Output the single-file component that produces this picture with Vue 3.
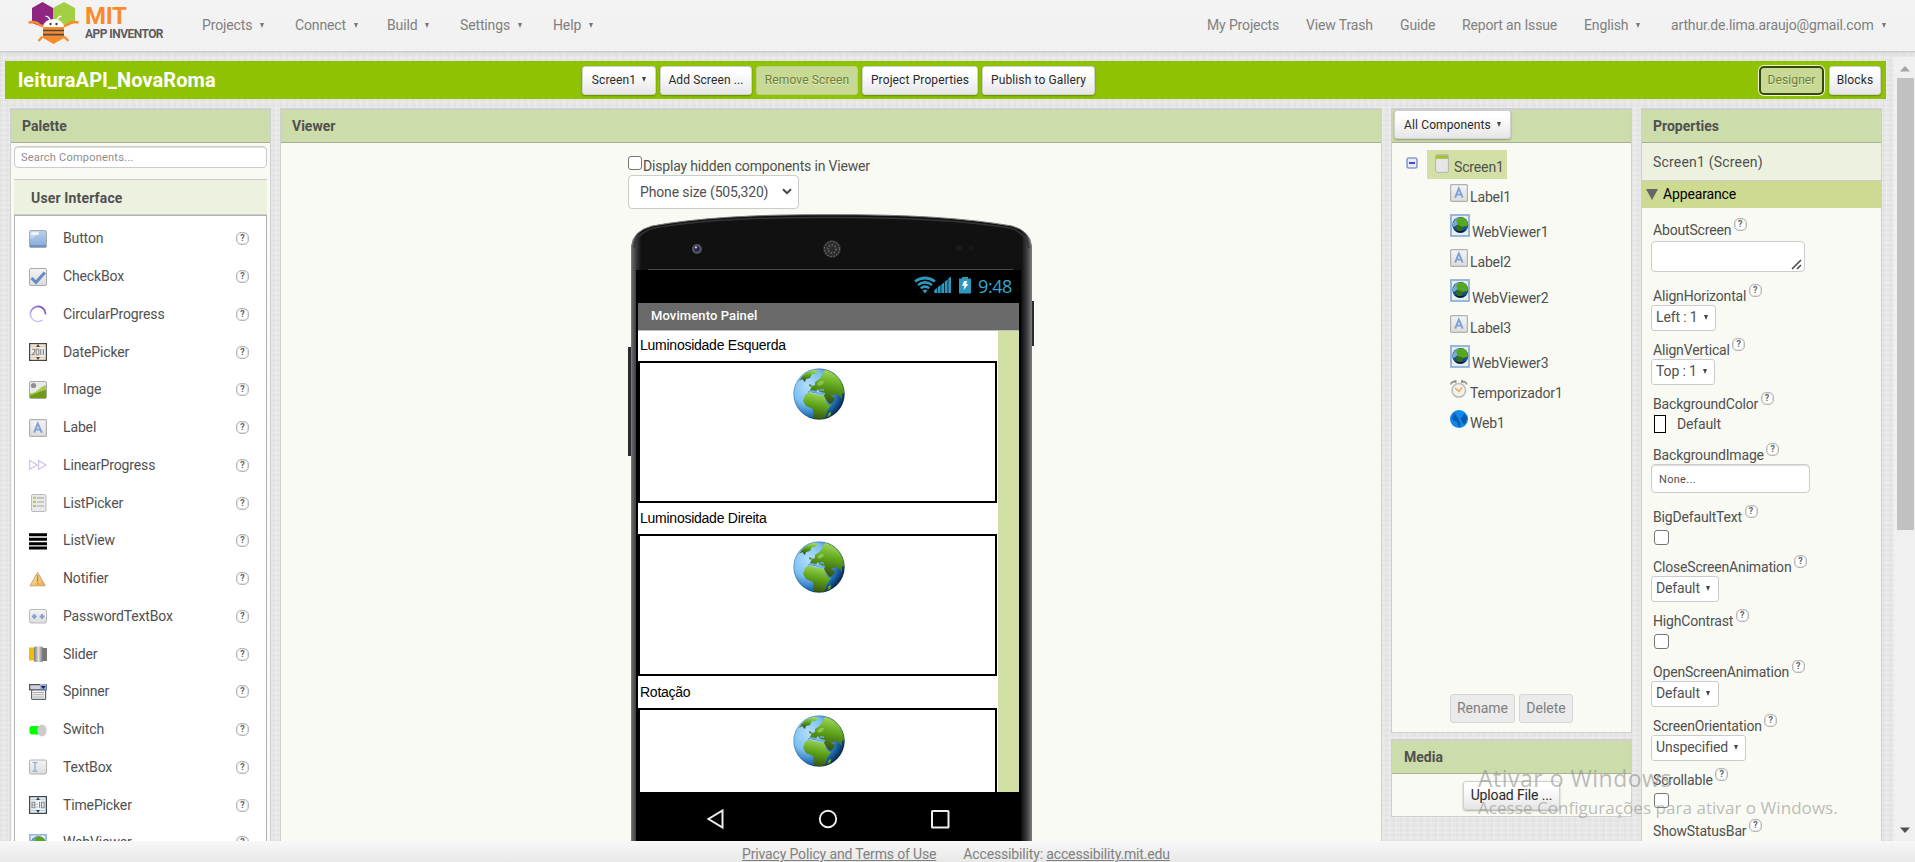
<script setup>
const menus = [
  { t: 'Projects', w: 93 },
  { t: 'Connect', w: 92 },
  { t: 'Build', w: 73 },
  { t: 'Settings', w: 93 },
  { t: 'Help', w: 60 },
]
const links = [
  { t: 'My Projects', w: 99 },
  { t: 'View Trash', w: 94 },
  { t: 'Guide', w: 62 },
  { t: 'Report an Issue', w: 122 },
  { t: 'English', w: 87, a: true },
  { t: 'arthur.de.lima.araujo@gmail.com', w: 244, a: true },
]
const palette = [
  ['Button', 'button'], ['CheckBox', 'check'], ['CircularProgress', 'circular'], ['DatePicker', 'date'],
  ['Image', 'image'], ['Label', 'label'], ['LinearProgress', 'linear'], ['ListPicker', 'listpicker'],
  ['ListView', 'listview'], ['Notifier', 'notifier'], ['PasswordTextBox', 'password'], ['Slider', 'slider'],
  ['Spinner', 'spinner'], ['Switch', 'switch'], ['TextBox', 'textbox'], ['TimePicker', 'time'], ['WebViewer', 'webviewer'],
]
const tree = [
  ['Label1', 'label'], ['WebViewer1', 'webviewer'], ['Label2', 'label'], ['WebViewer2', 'webviewer'],
  ['Label3', 'label'], ['WebViewer3', 'webviewer'], ['Temporizador1', 'clock'], ['Web1', 'web'],
]
const props = [
  { n: 'AboutScreen', k: 'area', h: 66 },
  { n: 'AlignHorizontal', k: 'sel', v: 'Left : 1', h: 54, w: 65 },
  { n: 'AlignVertical', k: 'sel', v: 'Top : 1', h: 54, w: 64 },
  { n: 'BackgroundColor', k: 'color', v: 'Default', h: 51 },
  { n: 'BackgroundImage', k: 'input', v: 'None...', h: 62 },
  { n: 'BigDefaultText', k: 'cb', h: 50 },
  { n: 'CloseScreenAnimation', k: 'sel', v: 'Default', h: 54, w: 68 },
  { n: 'HighContrast', k: 'cb', h: 51 },
  { n: 'OpenScreenAnimation', k: 'sel', v: 'Default', h: 54, w: 68 },
  { n: 'ScreenOrientation', k: 'sel', v: 'Unspecified', h: 54, w: 95 },
  { n: 'Scrollable', k: 'cb', h: 51 },
  { n: 'ShowStatusBar', k: '', h: 51 },
]
const screens = ['Luminosidade Esquerda', 'Luminosidade Direita', 'Rotação']
</script>

<template>
  <div class="app">
    <svg class="defs" width="0" height="0">
      <defs>
        <linearGradient id="gBlue" x1="0" y1="0" x2="0" y2="1"><stop offset="0" stop-color="#b9cfec" /><stop offset="1" stop-color="#86a9d6" /></linearGradient>
        <linearGradient id="gGrey" x1="0" y1="0" x2="0" y2="1"><stop offset="0" stop-color="#f4f4f4" /><stop offset="1" stop-color="#dcdcdc" /></linearGradient>
        <linearGradient id="gWarn" x1="0" y1="0" x2="1" y2="1"><stop offset="0" stop-color="#fff0c8" /><stop offset="1" stop-color="#e8a63c" /></linearGradient>
        <linearGradient id="gKnob" x1="0" x2="1"><stop offset="0" stop-color="#777" /><stop offset=".5" stop-color="#e0e0e0" /><stop offset="1" stop-color="#707070" /></linearGradient>
        <linearGradient id="gRing" x1="0" y1="1" x2="1" y2="0"><stop offset="0" stop-color="#d8c8f2" /><stop offset="1" stop-color="#6a3cb8" /></linearGradient>
        <radialGradient id="gSea" cx=".3" cy=".35" r=".75"><stop offset="0" stop-color="#b4dfff" /><stop offset=".45" stop-color="#7cc0f2" /><stop offset=".8" stop-color="#1d68b0" /><stop offset="1" stop-color="#082446" /></radialGradient>
        <linearGradient id="gLand" x1=".6" y1="0" x2=".4" y2="1"><stop offset="0" stop-color="#a6dc62" /><stop offset=".45" stop-color="#5fa51a" /><stop offset="1" stop-color="#30480f" /></linearGradient>
        <linearGradient id="gEdge" x1="0" x2="1"><stop offset="0" stop-color="#6a6b6d" /><stop offset=".008" stop-color="#4a4b4e" /><stop offset=".016" stop-color="#2a2b2d" /><stop offset=".025" stop-color="#111" /><stop offset=".975" stop-color="#111" /><stop offset=".988" stop-color="#3a3b3f" /><stop offset="1" stop-color="#77787a" /></linearGradient>
        <clipPath id="cGlobe"><circle cx="26" cy="26" r="25.3" /></clipPath>
      </defs>
      <symbol id="i-button" viewBox="0 0 18 18"><rect x=".5" y=".5" width="17" height="17" rx="1.5" fill="url(#gBlue)" stroke="#a3abb5" /><rect x="1" y="15" width="16" height="2" fill="#6c93c9" /><path d="M1 9Q7 8 10 1H1z" fill="#d3e1f4" opacity=".55" /><rect x="2" y="2" width="8" height="3" rx="1.5" fill="#edf3fb" /></symbol>
      <symbol id="i-check" viewBox="0 0 18 18"><rect x=".5" y=".5" width="17" height="17" rx="1.5" fill="url(#gGrey)" stroke="#aaa" /><path d="M2.5 10L7 14.3 15.8 4.6" fill="none" stroke="#6489c4" stroke-width="3" /></symbol>
      <symbol id="i-circular" viewBox="0 0 18 18"><path d="M2.5 13A7.6 7.6 0 1 1 16.6 9.5" fill="none" stroke="url(#gRing)" stroke-width="1.7" /><path d="M2.5 13A7.6 7.6 0 0 0 13.5 15" fill="none" stroke="#c9b6ea" stroke-width="1.1" /></symbol>
      <symbol id="i-date" viewBox="0 0 18 18"><rect x=".6" y=".6" width="16.8" height="16.8" fill="#f7f5f2" stroke="#444" stroke-width="1.3" /><path d="M2 3.5h14M2 14.5h14" stroke="#f3c396" stroke-width="1.6" /><path d="M9 1L11 4H7zM9 17L11 14H7z" fill="#5c4634" /><rect x="2" y="5" width="14" height="8" fill="#eee" /><path d="M3 6.2h2.6V9L3 11.8h2.8M7.2 6.2h2.6v5.6H7.2zM11.8 6v6M14.4 6v6" fill="none" stroke="#888" stroke-width="1.100" /></symbol>
      <symbol id="i-image" viewBox="0 0 18 18"><rect x=".5" y=".5" width="17" height="17" rx="1.5" fill="#e9e9e9" stroke="#aaa" /><circle cx="4.5" cy="4.5" r="2.6" fill="#8f8f8f" /><path d="M1 12Q5 13 9 9T17 4V17H1z" fill="#aacc44" /><path d="M1 14.5Q6 12.5 10 11T17 9V17H1z" fill="#6f9c17" /></symbol>
      <symbol id="i-label" viewBox="0 0 18 18"><rect x=".6" y=".6" width="16.8" height="16.8" rx="1" fill="url(#gGrey)" stroke="#b0b0b0" stroke-width="1.2" /><path d="M5.2 13.6L8.8 4.4 12.7 13.6M6.6 10.6h4.6" fill="none" stroke="#7fa0d4" stroke-width="1.9" /></symbol>
      <symbol id="i-linear" viewBox="0 0 18 18"><path d="M.7 4.5V13.3L8.3 9zM9.7 4.5V13.3L17 9z" fill="#fff" stroke="#cdbfe9" stroke-width="1.1" /></symbol>
      <symbol id="i-listpicker" viewBox="0 0 18 18"><rect x="2.5" y=".5" width="14.5" height="17" rx="1.5" fill="#e9e9e9" stroke="#bbb" /><path d="M8 3.8h7M8 8h7M8 12h7" stroke="#aaa" stroke-width="1.2" /><path d="M4 3.8h3M4 8h3M4 12h3" stroke="#a6cf4e" stroke-width="2" /></symbol>
      <symbol id="i-listview" viewBox="0 0 18 18"><path d="M0 2.8h18M0 7.3h18M0 11.8h18M0 16h18" stroke="#000" stroke-width="2.9" /></symbol>
      <symbol id="i-notifier" viewBox="0 0 18 18"><path d="M8.6 2.4L16.3 15.8H1z" fill="url(#gWarn)" stroke="#c9a071" /><path d="M8.6 5v7M8.6 13v1.5" stroke="#c08a34" stroke-width="1.3" /></symbol>
      <symbol id="i-password" viewBox="0 0 18 18"><rect x=".5" y="2.5" width="17" height="13.5" rx="1.5" fill="url(#gGrey)" stroke="#bbb" /><path d="M5.3 7v5M2.9 9.5h4.8M13 7v5M10.6 9.5h4.8" stroke="#7f9fd0" stroke-width="1.9" /></symbol>
      <symbol id="i-slider" viewBox="0 0 18 18"><rect y="2.5" width="6" height="13" fill="#f0bd0a" /><rect x="13" y="3" width="5" height="13" fill="#777" /><rect x="5" y="1.5" width="9" height="15.5" rx="1.5" fill="url(#gKnob)" /></symbol>
      <symbol id="i-spinner" viewBox="0 0 18 18"><rect x=".6" y="1.6" width="16.8" height="5.2" fill="#cfd2d6" stroke="#4b545e" stroke-width="1.2" /><rect x="11" y="1" width="6.5" height="6" fill="#94aede" /><path d="M11.8 3h5L14.3 6z" fill="#14213d" /><rect x="2.6" y="6.8" width="14" height="9.6" rx="1" fill="#f4f4f4" stroke="#5b6670" stroke-width="1.2" /><path d="M4 9.5h11M4 11.7h11M4 14h11" stroke="#aaa" /></symbol>
      <symbol id="i-switch" viewBox="0 0 18 18"><rect x=".5" y="5" width="14" height="8.6" rx="2.5" fill="#0f0" /><ellipse cx="13" cy="9.5" rx="4.6" ry="6" fill="#ccc" /></symbol>
      <symbol id="i-textbox" viewBox="0 0 18 18"><rect x=".5" y="2" width="17" height="14" rx="1.5" fill="url(#gGrey)" stroke="#b0b0b0" /><path d="M3.5 4.5h5M6 4.5v8.5M3.5 13.2h5" stroke="#8fa8cf" stroke-width="1.2" /></symbol>
      <symbol id="i-time" viewBox="0 0 18 18"><rect x=".6" y=".6" width="16.8" height="16.8" fill="#f2f6f9" stroke="#3e464e" stroke-width="1.3" /><path d="M2 3.5h14M2 14.5h14" stroke="#b9d2e4" stroke-width="1.6" /><path d="M9 1L11 4H7zM9 17L11 14H7z" fill="#444" /><path d="M3 6.2h2.8v5.6H3zM3 9h2.8M8 7.5v1M8 10.5v1M10.6 6v6M12.6 6.2h2.6v5.6h-2.6z" fill="none" stroke="#888" stroke-width="1.100" /></symbol>
      <symbol id="i-webviewer" viewBox="0 0 20 23" preserveAspectRatio="none"><rect x="1" y="1" width="18" height="21" fill="#e8eef0" stroke="#8fb0da" stroke-width="1.8" /><circle cx="10.3" cy="11" r="8" fill="#1b4f86" /><path d="M3 9Q6 3 10 3Q5 7 8 10L4 13Q2 12 3 9z" fill="#6fb0de" /><path d="M6 6Q11 1.500 15 4.500Q19 8 17.500 12Q14 12 12 13.500Q7 12 7 9z" fill="#57a81c" /><path d="M6 12Q9 10 13 13Q12 16 10 18Q6 17 6 12z" fill="#35701c" /><path d="M4 15.500Q10 19 16.500 15.500Q10 22 4 15.500z" fill="#08182c" /></symbol>
      <symbol id="i-clock" viewBox="0 0 18 18"><path d="M1 4.500Q1 1.500 5.500 1.600M12 1.600Q16.500 1.500 16.500 4.500M5.500 0v3M12 0v3" stroke="#999" stroke-width="2" fill="none" /><circle cx="8.8" cy="10.3" r="6.8" fill="#f3f1ee" stroke="#bdbdbd" stroke-width="1.6" /><path d="M5 8l4 3.4 3.2-4.2" stroke="#f2a950" stroke-width="1.4" fill="none" /></symbol>
      <symbol id="i-web" viewBox="0 0 18 18"><circle cx="9" cy="9" r="9" fill="#1187ea" /><path d="M4 3.500Q6 3 6.500 6.500L8.500 8.500Q8 11 10 12Q11 14 10 17.500Q7 15 7 12Q4 12 2 9Q3 5 4 3.500zM14 3.500Q17 6 17.500 9Q15 11 15.500 14Q12 14 12 11L10.500 8.500Q13 7 14 3.500z" fill="#0a5cb0" /></symbol>
      <symbol id="globe" viewBox="0 0 52 52">
        <circle cx="26" cy="26" r="25.6" fill="url(#gSea)" />
        <g clip-path="url(#cGlobe)" fill="url(#gLand)">
          <path d="M6 13Q10 5 20 2L26 3 22 6 19 6 17 10 13 11 12 14 9 11z" />
          <path d="M16 16L19 17 18 19 16 18zM17 22L19 18 22 17 22 14 25 12 28 9 31 3 34 1Q48 5 52 20V27L49 25 49 31 46 28 43 26 38 28 42 30 40 34 37 36 34 33 31 28 32 25 27 24 25 21 22 25 18 24z" />
          <path d="M12 27L16 24 20 26 26 27 31 28 34 36 38 37 34 43 32 50 27 53 21 51 20 41 13 38 10 33z" />
          <path d="M35 46L38 44 37 49 34 50z" />
        </g>
        <path d="M24 16L27 13 31 13 30 16 26 18z" fill="#b5e08a" opacity=".5" />
        <path d="M15 24Q21 22 24 25L31 26M27 22h4" fill="none" stroke="#67aee2" stroke-width="1.700" />
        <circle cx="26" cy="26" r="25.2" fill="none" stroke="#0b2238" stroke-opacity=".25" />
      </symbol>
    </svg>

    <header class="top">
      <div class="logo">
        <svg width="52" height="44" viewBox="0 0 52 44">
          <path d="M14.5 0L25 6V21L14.5 25 4 21V6z" fill="#90257f" />
          <path d="M36 0L47 6V21L36 25 25 21V6z" fill="#a3cf45" />
          <path d="M.5 20.500Q8 19 11 22.500L16 24.500H35L40 22.500Q43 19 50.500 20.500M14.500 34.500L10.500 39M36 34.500L40.500 39" fill="none" stroke="#f98b2d" stroke-width="2.400" />
          <path d="M15 25H36V36L25.5 42 15 36z" fill="#f98b2d" />
          <path d="M15 28.500H36M15 32.700H36" stroke="#4b4b4d" stroke-width="1.700" />
          <path d="M15 25Q16 17.500 25.500 17Q35 17.500 36 25z" fill="#fff" />
          <path d="M17.500 14.500Q21 14 22 18.500M33.500 14.500Q30 14 29 18.500" fill="none" stroke="#fff" stroke-width="1.300" />
          <circle cx="22.500" cy="22" r="1.200" fill="#444" /><circle cx="28.500" cy="22" r="1.200" fill="#444" />
        </svg>
        <div class="brand"><b>MIT</b><span>APP INVENTOR</span></div>
      </div>
      <nav class="menus">
        <span v-for="m in menus" :key="m.t" :style="{ width: m.w + 'px' }">{{ m.t }}<i class="arr"></i></span>
      </nav>
      <nav class="links">
        <span v-for="m in links" :key="m.t" :style="{ width: m.w + 'px' }">{{ m.t }}<i v-if="m.a" class="arr"></i></span>
      </nav>
    </header>

    <div class="body">
      <div class="main">
        <div class="bar">
          <h1>leituraAPI_NovaRoma</h1>
          <div class="btns">
            <button class="b1">Screen1<i class="arr dk"></i></button>
            <button class="b2">Add Screen ...</button>
            <button class="b3 off">Remove Screen</button>
            <button class="b4">Project Properties</button>
            <button class="b5">Publish to Gallery</button>
          </div>
          <div class="modes">
            <button class="b6 off focus">Designer</button>
            <button class="b7">Blocks</button>
          </div>
        </div>

        <div class="cols">
          <section class="panel pal">
            <h2>Palette</h2>
            <div class="search">Search Components...</div>
            <h3>User Interface</h3>
            <div class="list">
              <div v-for="p in palette" :key="p[0]" class="pi">
                <svg width="18" height="18"><use :href="'#i-' + p[1]" /></svg>
                <span>{{ p[0] }}</span>
                <em class="q">?</em>
              </div>
            </div>
          </section>

          <section class="panel view">
            <h2>Viewer</h2>
            <div class="vwrap">
              <label class="hid"><i class="cbx s"></i><span>Display hidden components in Viewer</span></label>
              <div class="vsel"><span>Phone size (505,320)</span>
                <svg width="10" height="7" viewBox="0 0 10 7"><path d="M1 1.200L5 5.200 9 1.200" fill="none" stroke="#444" stroke-width="2" /></svg>
              </div>
              <div class="phone">
                <svg class="shell" width="406" height="640" viewBox="0 0 406 640">
                  <rect x="0" y="133" width="5" height="109" fill="#2b2b2d" />
                  <rect x="402" y="87" width="4" height="45" fill="#2b2b2d" />
                  <path d="M3.500 640V32Q5 17 24 12Q90 0 202 .7Q315 0 384 12Q402 17 403.500 32V640z" fill="url(#gEdge)" stroke="#77797b" />
                  <path d="M6 34Q8 19 26 14Q90 3 202 3.500Q315 3 382 14Q399 19 401 34" fill="none" stroke="#333" stroke-width="1.500" />
                  <path d="M20 55.500H385" stroke="#4a4a4a" />
                  <circle cx="69" cy="35" r="5" fill="#50535a" /><circle cx="69" cy="35" r="2.500" fill="#23205e" /><circle cx="68" cy="33.500" r="1" fill="#ddd" />
                  <circle cx="204" cy="35" r="9" fill="#2c2c2c" /><circle cx="204" cy="35" r="7.500" fill="none" stroke="#6a6a6a" stroke-width="1.200" stroke-dasharray="1.500 1.500" /><circle cx="204" cy="35" r="4" fill="none" stroke="#6a6a6a" stroke-width="1.500" stroke-dasharray="1.500 1.500" />
                  <circle cx="331" cy="34" r="3" fill="#1b1b1b" /><circle cx="343" cy="34" r="2" fill="#1b1b1b" />
                </svg>
                <div class="scr">
                  <div class="status">
                    <svg width="58" height="20" viewBox="0 0 58 20">
                      <g fill="none" stroke="#2e97bd" stroke-width="2.700"><path d="M1 5.500Q11 -1.500 21 5.500" /><path d="M4 9Q11 3.800 18 9" /><path d="M6.800 12.200Q11 9 15.200 12.200" /></g>
                      <path d="M8.500 14.500Q11 12.500 13.500 14.500L11 17.500z" fill="#2e97bd" />
                      <path d="M20.300 17V14l2.800-2v5zM23.800 17v-6l2.800-2v8zM27.300 17V8.500l2.800-2V17zM30.800 17V5.500l2.800-2V17zM34.300 17V2.500l2.700-2V17z" fill="#2e97bd" />
                      <path d="M45 2.500h3V1h6v1.500h3V17.500H45z" fill="#2e97bd" /><path d="M50 5h3.500l-1.500 3h2.500l-5 6 1-4.200H48z" fill="#fff" />
                    </svg>
                    <span>9:48</span>
                  </div>
                  <div class="title">Movimento Painel</div>
                  <div class="canvas">
                    <div class="form">
                      <div v-for="s in screens" :key="s" class="blk">
                        <div class="lb">{{ s }}</div>
                        <div class="wv"><svg width="52" height="52"><use href="#globe" /></svg></div>
                      </div>
                    </div>
                  </div>
                  <div class="navb">
                    <svg width="20" height="22" viewBox="0 0 20 22"><path d="M16.500 2.500V19.500L2.500 11z" fill="none" stroke="#eee" stroke-width="2" /></svg>
                    <svg width="20" height="22" viewBox="0 0 20 22"><circle cx="10" cy="11" r="8.200" fill="none" stroke="#eee" stroke-width="1.900" /></svg>
                    <svg width="20" height="22" viewBox="0 0 20 22"><rect x="2" y="3" width="16.500" height="16.500" rx=".5" fill="none" stroke="#eee" stroke-width="2" /></svg>
                  </div>
                </div>
              </div>
            </div>
          </section>

          <div class="third">
            <section class="panel comp">
              <h2 class="hb"><button>All Components<i class="arr dk"></i></button></h2>
              <div class="tree">
                <div class="root">
                  <svg width="12" height="12" viewBox="0 0 12 12"><rect x="1" y="1" width="10" height="10" rx="2" fill="#e9edf8" stroke="#8b9bcb" stroke-width="1.600" /><path d="M3 6h6" stroke="#11c" stroke-width="1.500" /></svg>
                  <div class="sel">
                    <svg width="14" height="19" viewBox="0 0 14 19"><rect x=".6" y=".6" width="12.800" height="17.800" rx="1.500" fill="#e6e6e6" stroke="#b5b5b5" /><rect x="1" y="1.200" width="12" height="3.600" fill="#a3c42d" /></svg>
                    <span>Screen1</span>
                  </div>
                </div>
                <div v-for="t in tree" :key="t[0]" class="tn" :class="{ w: t[1] === 'webviewer' }">
                  <svg :width="t[1] === 'webviewer' ? 20 : 18" :height="t[1] === 'webviewer' ? 23 : 18"><use :href="'#i-' + t[1]" /></svg>
                  <span>{{ t[0] }}</span>
                </div>
              </div>
              <div class="acts"><button class="gr b8">Rename</button><button class="gr b9">Delete</button></div>
            </section>
            <section class="panel media">
              <h2>Media</h2>
              <div class="up"><button>Upload File ...</button></div>
            </section>
          </div>

          <section class="panel prop">
            <h2>Properties</h2>
            <div class="sub">Screen1 (Screen)</div>
            <div class="cat"><i></i>Appearance</div>
            <div class="fields">
              <div v-for="p in props" :key="p.n" class="f" :style="{ height: p.h + 'px' }">
                <div class="fl"><span>{{ p.n }}</span><em class="q">?</em></div>
                <div v-if="p.k === 'area'" class="area"><svg width="11" height="11" viewBox="0 0 11 11"><path d="M1 10L10 1M6 10L10 6" stroke="#444" stroke-width="1.500" /></svg></div>
                <div v-else-if="p.k === 'sel'" class="ps" :style="{ width: p.w + 'px' }">{{ p.v }}<i class="arr dk"></i></div>
                <div v-else-if="p.k === 'color'" class="pc"><i></i>{{ p.v }}</div>
                <div v-else-if="p.k === 'input'" class="pin">{{ p.v }}</div>
                <i v-else-if="p.k === 'cb'" class="cbx"></i>
              </div>
            </div>
          </section>
        </div>
      </div>

      <div class="scroll">
        <svg width="21" height="21" viewBox="0 0 21 21"><path d="M6 14.500L11 9 16 14.500z" fill="#a3a3a3" /></svg>
        <div class="thumb"></div>
        <svg class="dn" width="21" height="21" viewBox="0 0 21 21"><path d="M6 7.500L11 13 16 7.500z" fill="#505050" /></svg>
      </div>
    </div>

    <footer><a>Privacy Policy and Terms of Use</a><span>Accessibility: <a>accessibility.mit.edu</a></span></footer>

    <div class="wm"><b>Ativar o Windows</b><span>Acesse Configurações para ativar o Windows.</span></div>
  </div>
</template>

<style>
html, body { overflow: hidden; }
</style>
<style scoped>
* { box-sizing: border-box; }
.app { position: relative; width: 1915px; height: 862px; overflow: hidden; display: flex; flex-direction: column; font: 14px/20px Roboto, "Liberation Sans", sans-serif; letter-spacing: -.14px; color: #505050; background: #e8e8e8; }
.defs { position: absolute; }
h1, h2, h3 { margin: 0; }
svg { display: block; flex: none; }
.top { height: 52px; flex: none; display: flex; background: linear-gradient(#f3f3f3, #f1f1f1); border-bottom: 1px solid #cdcdcd; color: #808080; box-shadow: 0 1px 2px #d0d0d0; z-index: 1; white-space: nowrap; }
.logo { width: 202px; padding: 2px 0 0 28px; display: flex; }
.brand { padding: 4px 0 0 5px; display: flex; flex-direction: column; }
.brand b { font: 700 24px/21px Roboto, sans-serif; color: #f98b2d; letter-spacing: -.3px; }
.brand span { font: 700 12px/14px Roboto, sans-serif; color: #5c5c5e; letter-spacing: -.55px; }
.menus, .links { display: flex; padding-top: 15px; }
.menus { flex: 1; }
.arr { display: inline-block; border: 2.500px solid transparent; border-top: 5px solid #777; border-bottom: 0; margin-left: 8px; vertical-align: 2px; }
.arr.dk { border-top-color: #444; margin-left: 6px; }
.body { flex: 1; min-height: 0; display: flex; background-color: #e7e7e7; background-image: repeating-linear-gradient(90deg, rgba(0,0,0,.022) 0 1px, transparent 1px 3px, rgba(255,255,255,.18) 3px 4px, transparent 4px 7px), repeating-linear-gradient(0deg, rgba(0,0,0,.02) 0 1px, transparent 1px 3px, rgba(255,255,255,.18) 3px 4px, transparent 4px 5px); }
.main { flex: 1; min-width: 0; padding: 9px 8px 0 5px; display: flex; flex-direction: column; }
.bar { height: 38px; flex: none; background: #8fc202; display: flex; align-items: center; position: relative; padding-left: 13px; }
h1 { width: 564px; font: 700 20px/36px Roboto, sans-serif; color: #fff; letter-spacing: .08px; }
button { font: 12px/18px Roboto, sans-serif; letter-spacing: .12px; color: #2a2a2a; height: 29px; padding: 0 0 1px; border: 1px solid #d0d0d0; border-radius: 3px; background: linear-gradient(#fff 20%, #e6e6e6); box-shadow: 0 1px 2px rgba(0,0,0,.3); white-space: nowrap; }
.btns, .modes { display: flex; gap: 4px; }
.modes { margin-left: auto; padding-right: 5px; gap: 5px; }
.b1 { width: 74px; } .b2 { width: 92px; } .b3 { width: 102px; } .b4 { width: 116px; } .b5 { width: 113px; }
.b6 { width: 65px; } .b7 { width: 52px; }
.off { background: #c7d994; color: #6d7d36; border-color: #b9cf80; box-shadow: none; text-shadow: 0 1px 0 #e5efc4; }
.focus { border: 2px solid #36480a; border-radius: 5px; box-shadow: 0 0 0 1px #eef6cc; }
.cols { flex: 1; min-height: 0; padding: 9px 4px 0 5px; display: flex; gap: 9px; overflow: hidden; }
.panel { border: 1px solid #cfcfcf; border-top-width: 2px; background: #f8faf3; flex: none; }
h2 { height: 33px; background: #ccdcaa; border-bottom: 1px solid #a9b194; font: 700 14px/32px Roboto, sans-serif; letter-spacing: 0; color: #505050; padding-left: 11px; }
.pal { width: 261px; height: 760px; display: flex; flex-direction: column; padding-right: 2px; }
.pal h2 { margin-right: -2px; }
.search { margin: 3px 1px 0 3px; height: 22px; border: 1px solid #ccc; border-radius: 4px; background: #fff; font-size: 11px; line-height: 21px; padding-left: 6px; color: #8c8c8c; letter-spacing: .22px; box-shadow: inset 0 1px 1px #ddd; }
h3 { margin: 11px 1px 0 3px; height: 36px; border-top: 1px solid #ccc; border-bottom: 1px solid #ccc; background: #edf2e0; font: 700 14px/36px Roboto, sans-serif; letter-spacing: .15px; padding-left: 17px; }
.list { margin: 0 1px 0 3px; flex: 1; background: #fff; border: 1px solid #b3b3b3; padding-top: 4px; }
.pi { height: 37.750px; display: flex; align-items: center; padding: 0 17px 0 14px; }
.pi span { margin-left: 16px; flex: 1; position: relative; top: -.5px; }
.q { width: 13px; height: 13px; border: 1px solid #b8b8b8; box-shadow: inset 0 0 0 1px #e2e2e2; background: #fff; border-radius: 5px; font: 700 9px/11px Roboto, sans-serif; letter-spacing: 0; text-align: center; color: #666; flex: none; }
.view { width: 1102px; height: 760px; }
.vwrap { width: 406px; margin: 13px 0 0 347px; }
.hid { height: 20px; display: flex; white-space: nowrap; }
.hid span { margin: 0 0 0 1px; letter-spacing: -.17px; }
.cbx { display: block; width: 15px; height: 15px; border: 1px solid #767676; border-radius: 3px; background: #fff; }
.cbx.s { width: 14px; height: 14px; }
.vsel { width: 171px; height: 34px; border: 1px solid #ccc; border-radius: 4px; background: #fff; display: flex; align-items: center; justify-content: space-between; padding: 0 6px 1px 11px; margin-top: -1px; }
.phone { position: relative; margin-top: 5px; height: 640px; padding: 56px 0 0 8px; }
.shell { position: absolute; left: 0; top: 0; }
.scr { position: relative; width: 385px; height: 600px; background: #000; padding: 0 2px; }
.status { height: 33px; display: flex; justify-content: flex-end; padding: 6px 5px 0 0; }
.status span { font: 18px/20px "Open Sans", "Noto Sans", sans-serif; color: #31a8d2; margin-left: 6px; width: 36px; letter-spacing: -.4px; }
.title { height: 28px; background: #696969; border-bottom: 1px solid #bbb; color: #fff; font: 500 13px/25px Roboto, sans-serif; padding-left: 13px; letter-spacing: .1px; }
.canvas { height: 461px; background: #d2e0a6; overflow: hidden; }
.form { width: 360px; background: #fff; }
.blk { height: 173.300px; }
.lb { height: 30px; font: 14px/29px "Liberation Sans", Arial, sans-serif; letter-spacing: -.25px; color: #000; padding-left: 2px; }
.wv { width: 359px; height: 142px; border: 2px solid #000; display: flex; justify-content: center; padding: 5px 0 0 3px; }
.navb { display: flex; justify-content: space-between; padding: 16px 69px 0 68px; }
.third { width: 241px; flex: none; display: flex; flex-direction: column; gap: 6px; }
.comp { height: 625px; display: flex; flex-direction: column; }
.hb { padding-left: 2px; }
.hb button { display: block; width: 117px; padding-bottom: 0; }
.tree { flex: 1; padding-top: 7px; }
.root { display: flex; padding-left: 14px; height: 34px; }
.root > svg { margin-top: 7px; }
.sel { margin-left: 9px; width: 80px; height: 29px; background: #d2e0a6; display: flex; padding: 4px 0 0 8px; }
.sel span { margin: 3px 0 0 5px; }
.tn { display: flex; padding-left: 58px; height: 30px; }
.tn svg { margin-top: -.5px; }
.tn span { margin: 2.500px 0 0 2px; }
.tn.w { height: 35.600px; }
.tn.w span { margin-top: 8px; }
.acts { display: flex; gap: 4px; padding: 0 0 9px 58px; }
.gr { font-size: 14px; letter-spacing: 0; background: #ebebeb; color: #808080; border-color: #d6d6d6; box-shadow: none; }
.b8 { width: 65px; } .b9 { width: 54px; }
.media { height: 78px; }
.media h2 { padding-left: 12px; }
.up { padding: 7px 0 0 71px; }
.up button { width: 97px; font-size: 14px; letter-spacing: -.14px; padding-bottom: 2px; }
.prop { width: 241px; height: 760px; }
.sub { height: 38px; background: #edf2e0; border-bottom: 1px solid #ccc; line-height: 38px; padding-left: 11px; letter-spacing: .2px; }
.cat { height: 27px; background: #ced991; color: #000; display: flex; align-items: center; padding: 0 0 1px 4px; }
.cat i { border: 6px solid transparent; border-top: 11px solid #666; border-bottom: 0; margin-right: 5px; }
.fields { padding: 12px 0 0 9px; }
.f { display: flex; flex-direction: column; align-items: flex-start; }
.fl { height: 19px; flex: none; display: flex; padding-left: 2px; letter-spacing: -.17px; }
.fl .q { margin: -2px 0 0 2.500px; }
.area { margin-top: 2px; width: 154px; height: 31px; border: 1px solid #ccc; border-radius: 4px; background: #fff; display: flex; align-items: flex-end; justify-content: flex-end; padding: 1px 2px; }
.ps { height: 26px; border: 1px solid #ccc; border-radius: 3px; background: #fff; line-height: 23px; padding-left: 4px; white-space: nowrap; }
.pc { display: flex; padding: 1px 0 0 3px; }
.pc i { width: 12px; height: 18px; border: 1px solid #000; background: #fff; margin: 1px 11px 0 0; }
.pin { width: 159px; height: 29px; border: 1px solid #ccc; border-radius: 4px; background: #fff; font-size: 11px; line-height: 29px; letter-spacing: .3px; padding-left: 7px; box-shadow: inset 0 1px 1px #ddd; }
.f > .cbx { margin: 4px 0 0 3px; }
.scroll { width: 21px; margin-top: 5px; background: #f0f0f0; position: relative; display: flex; flex-direction: column; z-index: 0; }
.thumb { margin: 0 1px 0 3px; height: 452px; background: #c1c1c1; }
.dn { margin-top: auto; }
footer { height: 21px; flex: none; background: linear-gradient(#f8f8f8, #e8e8e8); color: #808080; display: flex; gap: 27px; padding-left: 742px; line-height: 26px; letter-spacing: -.15px; white-space: nowrap; }
a { text-decoration: underline; }
.wm { position: absolute; left: 1478px; top: 762px; display: flex; flex-direction: column; color: rgba(140, 140, 140, .58); font-family: "Open Sans", "Noto Sans", sans-serif; white-space: nowrap; }
.wm b { font-weight: 400; font-size: 23px; line-height: 32px; letter-spacing: .5px; }
.wm span { font-size: 17px; line-height: 28px; letter-spacing: .05px; }
</style>
